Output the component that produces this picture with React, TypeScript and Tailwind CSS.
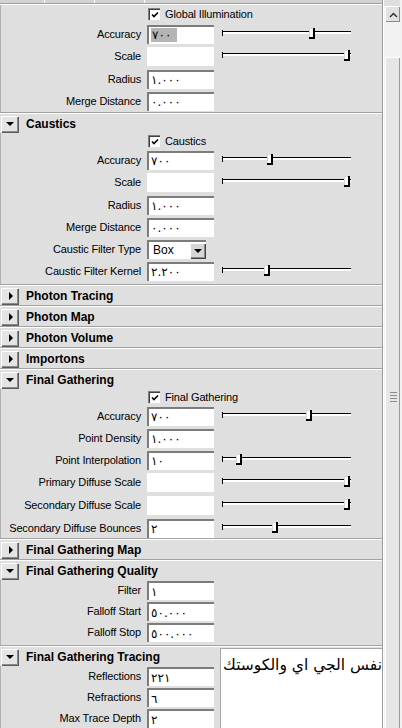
import React from "react";

type RowDef =
  | { kind: "field"; label: string; value: string; slider?: number; selected?: boolean }
  | { kind: "swatch"; label: string; slider?: number }
  | { kind: "combo"; label: string; value: string };

const font = "font-['Liberation_Sans','DejaVu_Sans',Arial,sans-serif]";

function TriButton({ open }: { open: boolean }) {
  return (
    <div className="ml-px flex h-[16px] w-[17px] shrink-0 items-center justify-center border-l border-t border-white bg-[#e4e4e4] shadow-[inset_-1px_-1px_0_#8a8a8a,1px_1px_0_#5a5a5a]">
      {open ? (
        <div className="h-0 w-0 border-x-[4px] border-t-[4px] border-x-transparent border-t-black" />
      ) : (
        <div className="ml-px h-0 w-0 border-y-[4px] border-l-[4px] border-y-transparent border-l-black" />
      )}
    </div>
  );
}

function Sep() {
  return <div className="h-[2px] border-b border-t border-b-white border-t-[#a2a2a2]" />;
}

function Header({ title, open }: { title: string; open: boolean }) {
  return (
    <div className="flex h-[19px] items-center">
      <TriButton open={open} />
      <span className="ml-[8px] text-[12px] font-bold leading-none text-black">{title}</span>
    </div>
  );
}

function Slider({ pos }: { pos: number }) {
  return (
    <div className="relative ml-[7px] h-full w-[130px]">
      <div className="absolute left-[1px] right-0 top-[8px] h-[3px] border-t border-black bg-white" />
      <div className="absolute left-[1px] top-[7px] h-[6px] w-px bg-black" />
      <div
        className="absolute top-[5px] h-[11px] w-[6px] border-b-2 border-r-2 border-black bg-white shadow-[inset_1px_1px_0_#d8d8d8]"
        style={{ left: pos }}
      />
    </div>
  );
}

function Row({ row, h }: { row: RowDef; h: number }) {
  return (
    <div className="flex items-center" style={{ height: h }}>
      <div className="w-[140px] shrink-0 whitespace-nowrap text-right text-[11px] leading-none tracking-[-0.15px] text-black">
        {row.label}
      </div>
      {row.kind === "field" && (
        <div className="ml-[6px] flex h-[19px] w-[67px] shrink-0 items-center border-l-2 border-t-2 border-[#7c7c7c] bg-white pl-[2px] font-['DejaVu_Sans',sans-serif] text-[12px] leading-none text-black">
          <span className={row.selected ? "bg-[#b4b4b4] py-[1px] pl-px pr-[6px]" : ""}>{row.value}</span>
        </div>
      )}
      {row.kind === "swatch" && <div className="ml-[6px] h-[19px] w-[67px] shrink-0 bg-white" />}
      {row.kind === "combo" && (
        <div className="ml-[6px] flex h-[19px] w-[59px] shrink-0 items-center border-l-2 border-t-2 border-[#7c7c7c] bg-white">
          <span className="ml-[4px] flex-1 text-[12px] leading-none">{row.value}</span>
          <div className="mr-px flex h-[15px] w-[15px] items-center justify-center border-l border-t border-white bg-[#d6d6d6] shadow-[inset_-1px_-1px_0_#8a8a8a,1px_1px_0_#404040]">
            <div className="h-0 w-0 border-x-[4px] border-t-[4px] border-x-transparent border-t-black" />
          </div>
        </div>
      )}
      {"slider" in row && row.slider !== undefined && <Slider pos={row.slider} />}
    </div>
  );
}

function Check({ label, h }: { label: string; h: number }) {
  return (
    <div className="flex items-center" style={{ height: h }}>
      <div className="ml-[147px] flex h-[12px] w-[12px] items-center justify-center border-l border-t border-[#808080] bg-white shadow-[inset_1px_1px_0_#404040]">
        <svg width="8" height="8" viewBox="0 0 8 8">
          <path d="M1 3.5 L3 5.5 L7 1.5" stroke="black" strokeWidth="1.6" fill="none" />
        </svg>
      </div>
      <span className="ml-[5px] text-[11px] leading-none tracking-[-0.15px] text-black">{label}</span>
    </div>
  );
}

function Body({ children }: { children: React.ReactNode }) {
  return <div className="border-l border-[#b0b0b0]">{children}</div>;
}

const gi: RowDef[] = [
  { kind: "field", label: "Accuracy", value: "٧٠٠", slider: 88, selected: true },
  { kind: "swatch", label: "Scale", slider: 123 },
  { kind: "field", label: "Radius", value: "١.٠٠٠" },
  { kind: "field", label: "Merge Distance", value: "٠.٠٠٠" },
];

const caustics: RowDef[] = [
  { kind: "field", label: "Accuracy", value: "٧٠٠", slider: 46 },
  { kind: "swatch", label: "Scale", slider: 123 },
  { kind: "field", label: "Radius", value: "١.٠٠٠" },
  { kind: "field", label: "Merge Distance", value: "٠.٠٠٠" },
  { kind: "combo", label: "Caustic Filter Type", value: "Box" },
  { kind: "field", label: "Caustic Filter Kernel", value: "٢.٢٠٠", slider: 43 },
];

const fg: RowDef[] = [
  { kind: "field", label: "Accuracy", value: "٧٠٠", slider: 85 },
  { kind: "field", label: "Point Density", value: "١.٠٠٠" },
  { kind: "field", label: "Point Interpolation", value: "١٠", slider: 15 },
  { kind: "swatch", label: "Primary Diffuse Scale", slider: 123 },
  { kind: "swatch", label: "Secondary Diffuse Scale", slider: 123 },
  { kind: "field", label: "Secondary Diffuse Bounces", value: "٢", slider: 51 },
];

const quality: RowDef[] = [
  { kind: "field", label: "Filter", value: "١" },
  { kind: "field", label: "Falloff Start", value: "٥٠.٠٠٠" },
  { kind: "field", label: "Falloff Stop", value: "٥٠٠.٠٠٠" },
];

const tracing: RowDef[] = [
  { kind: "field", label: "Reflections", value: "٢٢١" },
  { kind: "field", label: "Refractions", value: "٦" },
  { kind: "field", label: "Max Trace Depth", value: "٢" },
];

const rowH = (r: RowDef) => (r.kind === "swatch" ? 23 : 22);

export default function App() {
  return (
    <div className={`relative flex h-[728px] w-[402px] overflow-hidden bg-[#dfdfdf] ${font}`}>
      {/* attribute panel */}
      <div className="w-[383px] shrink-0 border-r border-[#9c9c9c]">
        <div className="flex h-[3px] bg-[#d2d2d2]">
          <div className="w-[45px] border-r border-white" />
          <div className="w-[50px] border-r border-white" />
          <div className="w-[50px] border-r border-white" />
        </div>
        <Sep />
        <Body>
          <Check label="Global Illumination" h={18} />
          {gi.map((r) => (
            <Row key={r.label} row={r} h={rowH(r)} />
          ))}
        </Body>
        <Sep />
        <Header title="Caustics" open />
        <Body>
          <Check label="Caustics" h={16} />
          {caustics.map((r) => (
            <Row key={r.label} row={r} h={rowH(r)} />
          ))}
          <div className="h-[2px]" />
        </Body>
        <Sep />
        <Header title="Photon Tracing" open={false} />
        <Sep />
        <Header title="Photon Map" open={false} />
        <Sep />
        <Header title="Photon Volume" open={false} />
        <Sep />
        <Header title="Importons" open={false} />
        <Sep />
        <Header title="Final Gathering" open />
        <Body>
          <Check label="Final Gathering" h={16} />
          {fg.map((r) => (
            <Row key={r.label} row={r} h={rowH(r)} />
          ))}
        </Body>
        <div className="-mt-px">
          <Sep />
        </div>
        <Header title="Final Gathering Map" open={false} />
        <Sep />
        <Header title="Final Gathering Quality" open />
        <Body>
          {quality.map((r) => (
            <Row key={r.label} row={r} h={21} />
          ))}
          <div className="h-[2px]" />
        </Body>
        <Sep />
        <Header title="Final Gathering Tracing" open />
        <Body>
          {tracing.map((r) => (
            <Row key={r.label} row={r} h={21} />
          ))}
        </Body>
      </div>

      {/* scrollbar */}
      <div className="flex w-[19px] shrink-0 flex-col border-l border-white bg-[#f2f2f2] pr-[2px]">
        <div className="h-[6px] bg-[#dfdfdf]" />
        <div className="ml-px flex h-[16px] items-center justify-center border-l border-t border-white bg-[#e2e2e2] shadow-[inset_-1px_-1px_0_#8a8a8a]">
          <svg width="9" height="6" viewBox="0 0 9 6">
            <path d="M1 5 L4.5 1.5 L8 5" stroke="#333" strokeWidth="1.5" fill="none" />
          </svg>
        </div>
        <div className="h-[35px]" />
        <div className="ml-px flex flex-1 flex-col items-center border-l border-t border-white bg-[#e6e6e6] shadow-[inset_-1px_0_0_#9a9a9a]">
          <div className="mt-[334px] flex flex-col gap-[2px]">
            {[0, 1, 2, 3].map((i) => (
              <div key={i} className="h-px w-[7px] bg-[#8c8c8c]" />
            ))}
          </div>
        </div>
      </div>

      {/* annotation */}
      <div className="absolute bottom-0 left-[220px] top-[648px] w-[162px] border-l border-t border-[#a6a6a6] bg-white">
        <div
          dir="rtl"
          className="mt-[9px] whitespace-nowrap text-right font-['DejaVu_Sans',sans-serif] text-[15.5px] leading-none text-black"
        >
          نفس الجي اي والكوستك
        </div>
      </div>
    </div>
  );
}
